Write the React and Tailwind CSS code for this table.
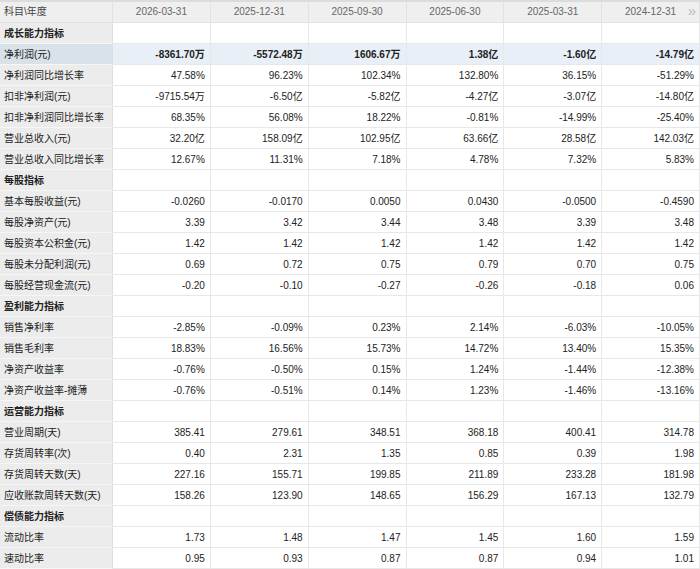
import React from 'react';

const dates = ['2026-03-31', '2025-12-31', '2025-09-30', '2025-06-30', '2025-03-31', '2024-12-31'];

const rows = [
  { section: '成长能力指标' },
  { label: '净利润(元)', values: ['-8361.70万', '-5572.48万', '1606.67万', '1.38亿', '-1.60亿', '-14.79亿'], highlight: true },
  { label: '净利润同比增长率', values: ['47.58%', '96.23%', '102.34%', '132.80%', '36.15%', '-51.29%'] },
  { label: '扣非净利润(元)', values: ['-9715.54万', '-6.50亿', '-5.82亿', '-4.27亿', '-3.07亿', '-14.80亿'] },
  { label: '扣非净利润同比增长率', values: ['68.35%', '56.08%', '18.22%', '-0.81%', '-14.99%', '-25.40%'] },
  { label: '营业总收入(元)', values: ['32.20亿', '158.09亿', '102.95亿', '63.66亿', '28.58亿', '142.03亿'] },
  { label: '营业总收入同比增长率', values: ['12.67%', '11.31%', '7.18%', '4.78%', '7.32%', '5.83%'] },
  { section: '每股指标' },
  { label: '基本每股收益(元)', values: ['-0.0260', '-0.0170', '0.0050', '0.0430', '-0.0500', '-0.4590'] },
  { label: '每股净资产(元)', values: ['3.39', '3.42', '3.44', '3.48', '3.39', '3.48'] },
  { label: '每股资本公积金(元)', values: ['1.42', '1.42', '1.42', '1.42', '1.42', '1.42'] },
  { label: '每股未分配利润(元)', values: ['0.69', '0.72', '0.75', '0.79', '0.70', '0.75'] },
  { label: '每股经营现金流(元)', values: ['-0.20', '-0.10', '-0.27', '-0.26', '-0.18', '0.06'] },
  { section: '盈利能力指标' },
  { label: '销售净利率', values: ['-2.85%', '-0.09%', '0.23%', '2.14%', '-6.03%', '-10.05%'] },
  { label: '销售毛利率', values: ['18.83%', '16.56%', '15.73%', '14.72%', '13.40%', '15.35%'] },
  { label: '净资产收益率', values: ['-0.76%', '-0.50%', '0.15%', '1.24%', '-1.44%', '-12.38%'] },
  { label: '净资产收益率-摊薄', values: ['-0.76%', '-0.51%', '0.14%', '1.23%', '-1.46%', '-13.16%'] },
  { section: '运营能力指标' },
  { label: '营业周期(天)', values: ['385.41', '279.61', '348.51', '368.18', '400.41', '314.78'] },
  { label: '存货周转率(次)', values: ['0.40', '2.31', '1.35', '0.85', '0.39', '1.98'] },
  { label: '存货周转天数(天)', values: ['227.16', '155.71', '199.85', '211.89', '233.28', '181.98'] },
  { label: '应收账款周转天数(天)', values: ['158.26', '123.90', '148.65', '156.29', '167.13', '132.79'] },
  { section: '偿债能力指标' },
  { label: '流动比率', values: ['1.73', '1.48', '1.47', '1.45', '1.60', '1.59'] },
  { label: '速动比率', values: ['0.95', '0.93', '0.87', '0.87', '0.94', '1.01'] },
];

const grid = 'grid grid-cols-[113px_repeat(6,1fr)]';

const App = () => {
  return (
    <div
      className="w-[700px] bg-white text-[10px] leading-[20px] text-[#222]"
      style={{ fontFamily: '"Liberation Sans", "Noto Sans CJK SC", sans-serif' }}
    >
      <div className="h-[2px] bg-[#dcdcdc]"></div>

      {/* header */}
      <div className={`${grid} bg-[#efefef]`}>
        <div className="h-[21px] border-b border-r border-[#e2e2e2] pl-1 text-[#444]">科目\年度</div>
        {dates.map((d, i) => (
          <div key={d} className="relative h-[21px] border-b border-r border-[#e2e2e2] text-center text-[#666]">
            {d}
            {i === dates.length - 1 && (
              <span className="absolute right-[3px] top-[-1px] text-[15px] text-[#bbb]">»</span>
            )}
          </div>
        ))}
      </div>

      {rows.map((row, idx) =>
        row.section ? (
          <div key={idx} className={grid}>
            <div className="h-[21px] border-b border-r border-b-[#f6f6f6] border-r-[#dedede] bg-[#ececec] pl-1 pt-px font-bold">
              {row.section}
            </div>
            {dates.map((d) => (
              <div key={d} className="h-[21px] border-b border-r border-[#e8e8e8]"></div>
            ))}
          </div>
        ) : (
          <div key={idx} className={`${grid} ${row.highlight ? 'font-bold' : ''}`}>
            <div
              className={`h-[21px] border-b border-r border-b-[#f6f6f6] border-r-[#dedede] pl-1 pt-px font-normal whitespace-nowrap ${
                row.highlight ? 'bg-[#d9e1e9]' : 'bg-[#ececec]'
              }`}
            >
              {row.label}
            </div>
            {row.values.map((v, i) => (
              <div
                key={i}
                className={`h-[21px] border-b border-r border-[#e8e8e8] pr-[5px] pt-px text-right ${
                  row.highlight ? 'bg-[#e8eff7]' : ''
                }`}
              >
                {v}
              </div>
            ))}
          </div>
        )
      )}
    </div>
  );
};

export default App;
